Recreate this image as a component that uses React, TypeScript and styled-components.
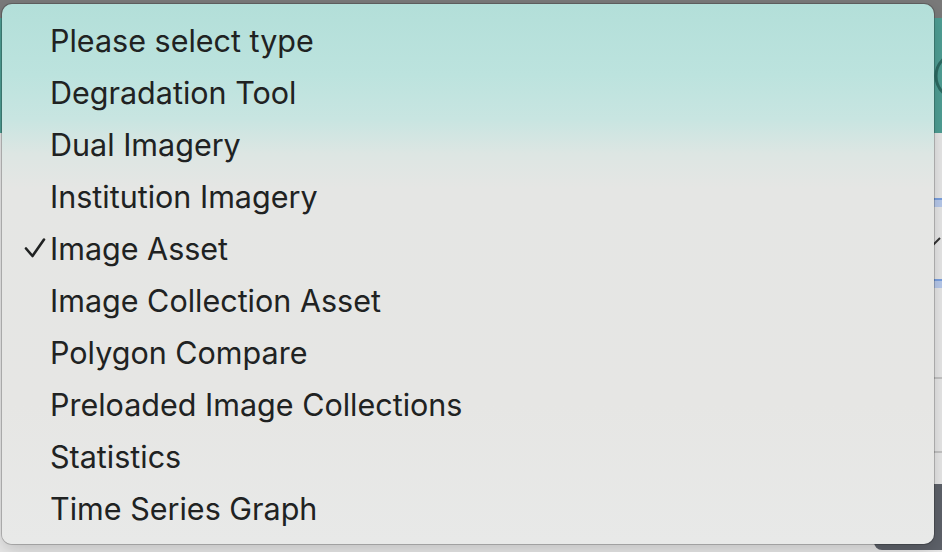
import styled, { createGlobalStyle } from 'styled-components';

const GlobalStyle = createGlobalStyle`
  html, body {
    margin: 0;
    padding: 0;
    width: 942px;
    height: 552px;
    overflow: hidden;
    background: #e8e8e8;
  }
  * {
    box-sizing: border-box;
  }
`;

const Screen = styled.div`
  position: relative;
  width: 942px;
  height: 552px;
  display: flex;
  flex-direction: column;
  font-family: Inter, 'Noto Sans', sans-serif;
`;

const TopBar = styled.div`
  height: 18px;
  background: #7a7a7a;
`;

const Header = styled.div`
  height: 115px;
  background: #4f9f95;
  display: flex;
  align-items: center;
  justify-content: flex-end;
  overflow: hidden;
`;

const HeaderIcon = styled.svg`
  width: 52px;
  height: 52px;
  margin-right: -43px;
  flex: none;
`;

const Body = styled.div`
  flex: 1;
  display: flex;
  justify-content: flex-end;
  background: #e8e8e8;
`;

const SidePane = styled.div`
  width: 68px;
  display: flex;
  flex-direction: column;
  align-items: flex-end;
  padding-top: 65px;
`;

const FocusBar = styled.div<{ $gap: number }>`
  width: 10px;
  height: 9px;
  margin-top: ${(p) => p.$gap}px;
  background: #b8caec;
  border-top: 2px solid #7ba1e0;
`;

const EditIcon = styled.svg`
  width: 10px;
  height: 10px;
  margin-top: 30px;
  margin-right: 1px;
`;

const Divider = styled.div<{ $gap: number }>`
  width: 10px;
  height: 2px;
  margin-top: ${(p) => p.$gap}px;
  background: #c4c4c4;
`;

const DarkButton = styled.div`
  width: 68px;
  height: 66px;
  margin-top: 31px;
  background: #5e626a;
  border-radius: 0 0 0 8px;
`;

const Menu = styled.ul`
  position: absolute;
  left: 2px;
  top: 4px;
  width: 932px;
  height: 540px;
  margin: 0;
  padding: 10px 0 14px;
  list-style: none;
  border-radius: 10px;
  background: linear-gradient(
    180deg,
    #b3dfd9 0px,
    #bce3de 70px,
    #c8e5e1 115px,
    #dde6e3 150px,
    #e5e6e4 185px,
    #e6e6e4 400px,
    #e8e9e8 540px
  );
  box-shadow: 0 0 0 1px rgba(0, 0, 0, 0.2), 0 6px 18px rgba(0, 0, 0, 0.18);
`;

const Item = styled.li`
  position: relative;
  height: 52px;
  display: flex;
  align-items: center;
  padding-left: 48px;
  font-size: 30.5px;
  color: #202222;
  white-space: nowrap;
`;

const Check = styled.svg`
  position: absolute;
  left: 21px;
  top: 15px;
  width: 24px;
  height: 22px;
`;

const types = [
  'Please select type',
  'Degradation Tool',
  'Dual Imagery',
  'Institution Imagery',
  'Image Asset',
  'Image Collection Asset',
  'Polygon Compare',
  'Preloaded Image Collections',
  'Statistics',
  'Time Series Graph',
];

const selected = 'Image Asset';

export default function App() {
  return (
    <Screen>
      <GlobalStyle />
      <TopBar />
      <Header>
        <HeaderIcon viewBox="0 0 52 52">
          <circle cx="26" cy="26" r="23" fill="none" stroke="#2c6a62" strokeWidth="3" />
        </HeaderIcon>
      </Header>
      <Body>
        <SidePane>
          <FocusBar $gap={0} />
          <EditIcon viewBox="0 0 10 10">
            <path d="M1 9 L9 1" stroke="#333" strokeWidth="2" />
          </EditIcon>
          <FocusBar $gap={32} />
          <Divider $gap={89} />
          <Divider $gap={72} />
          <DarkButton />
        </SidePane>
      </Body>
      <Menu>
        {types.map((t) => (
          <Item key={t}>
            {t === selected && (
              <Check viewBox="0 0 24 22">
                <path
                  d="M3 11.5 L9.5 19 L21 2.5"
                  fill="none"
                  stroke="#202222"
                  strokeWidth="2.6"
                  strokeLinecap="round"
                  strokeLinejoin="round"
                />
              </Check>
            )}
            {t}
          </Item>
        ))}
      </Menu>
    </Screen>
  );
}
